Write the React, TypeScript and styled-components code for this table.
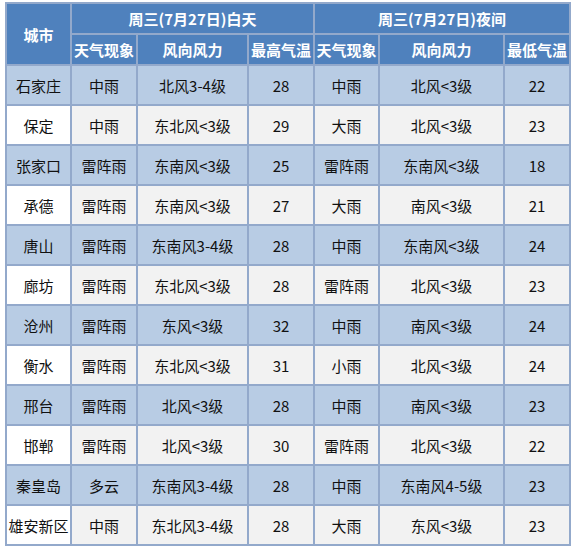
import styled, { createGlobalStyle } from "styled-components";

const GlobalStyle = createGlobalStyle`
  body {
    margin: 0;
    background: #ffffff;
    font-family: "Noto Sans CJK SC", "Liberation Sans", sans-serif;
  }
`;

const Page = styled.div`
  padding: 2px 0 0 5px;
`;

const Table = styled.table`
  border-collapse: collapse;
  table-layout: fixed;
  width: 566px;
  font-size: 15px;
  color: #111111;
`;

const HeadCell = styled.th`
  background: #4f81bd;
  color: #ffffff;
  font-weight: bold;
  height: 29px;
  padding: 0;
  border: 2px solid #93a9cb;
  text-align: center;
  white-space: nowrap;
`;

const Row = styled.tr<{ $shade: boolean }>`
  height: 40px;
  td {
    background: ${(p) => (p.$shade ? "#b8cce4" : "#f2f2f2")};
  }
  td:first-child {
    background: ${(p) => (p.$shade ? "#b8cce4" : "#ffffff")};
  }
`;

const Cell = styled.td`
  padding: 0;
  border: 2px solid #93a9cb;
  text-align: center;
  white-space: nowrap;
`;

const widths = [65, 66, 111, 66, 65, 125, 66];

const rows: string[][] = [
  ["石家庄", "中雨", "北风3-4级", "28", "中雨", "北风<3级", "22"],
  ["保定", "中雨", "东北风<3级", "29", "大雨", "北风<3级", "23"],
  ["张家口", "雷阵雨", "东南风<3级", "25", "雷阵雨", "东南风<3级", "18"],
  ["承德", "雷阵雨", "东南风<3级", "27", "大雨", "南风<3级", "21"],
  ["唐山", "雷阵雨", "东南风3-4级", "28", "中雨", "东南风<3级", "24"],
  ["廊坊", "雷阵雨", "东北风<3级", "28", "雷阵雨", "北风<3级", "23"],
  ["沧州", "雷阵雨", "东风<3级", "32", "中雨", "南风<3级", "24"],
  ["衡水", "雷阵雨", "东北风<3级", "31", "小雨", "北风<3级", "24"],
  ["邢台", "雷阵雨", "北风<3级", "28", "中雨", "南风<3级", "23"],
  ["邯郸", "雷阵雨", "北风<3级", "30", "雷阵雨", "北风<3级", "22"],
  ["秦皇岛", "多云", "东南风3-4级", "28", "中雨", "东南风4-5级", "23"],
  ["雄安新区", "中雨", "东北风3-4级", "28", "大雨", "东风<3级", "23"],
];

export default function App() {
  return (
    <Page>
      <GlobalStyle />
      <Table>
        <colgroup>
          {widths.map((w, i) => (
            <col key={i} style={{ width: w }} />
          ))}
        </colgroup>
        <thead>
          <tr>
            <HeadCell rowSpan={2}>城市</HeadCell>
            <HeadCell colSpan={3}>周三(7月27日)白天</HeadCell>
            <HeadCell colSpan={3}>周三(7月27日)夜间</HeadCell>
          </tr>
          <tr>
            <HeadCell>天气现象</HeadCell>
            <HeadCell>风向风力</HeadCell>
            <HeadCell>最高气温</HeadCell>
            <HeadCell>天气现象</HeadCell>
            <HeadCell>风向风力</HeadCell>
            <HeadCell>最低气温</HeadCell>
          </tr>
        </thead>
        <tbody>
          {rows.map((r, i) => (
            <Row key={r[0]} $shade={i % 2 === 0}>
              {r.map((v, j) => (
                <Cell key={j}>{v}</Cell>
              ))}
            </Row>
          ))}
        </tbody>
      </Table>
    </Page>
  );
}
